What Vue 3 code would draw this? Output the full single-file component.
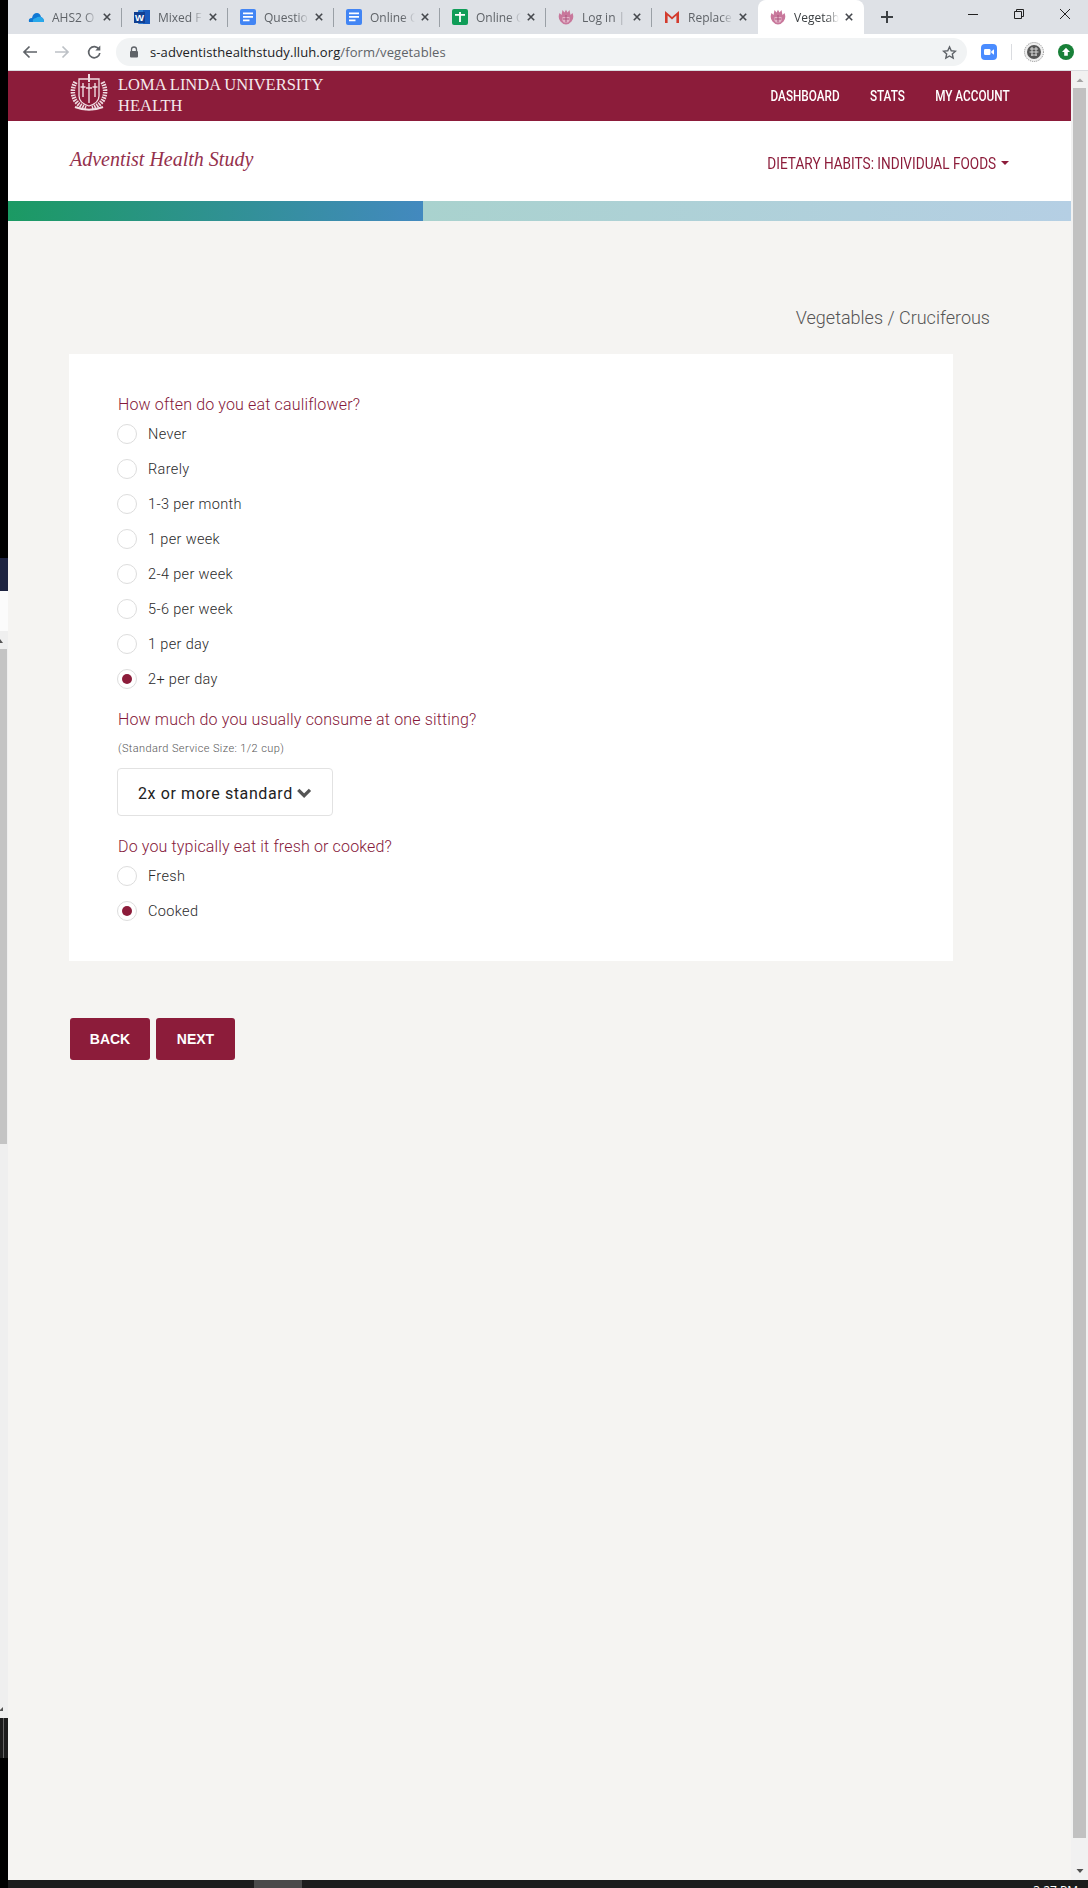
<script setup>
const tabs = [
  { title: 'AHS2 O', icon: 'cloud' },
  { title: 'Mixed F', icon: 'word' },
  { title: 'Questio', icon: 'docs' },
  { title: 'Online C', icon: 'docs' },
  { title: 'Online C', icon: 'sheets' },
  { title: 'Log in |', icon: 'crown' },
  { title: 'Replace', icon: 'gmail' },
  { title: 'Vegetab', icon: 'crown', active: true }
]

const frequency = ['Never', 'Rarely', '1-3 per month', '1 per week', '2-4 per week', '5-6 per week', '1 per day', '2+ per day']
const preparation = ['Fresh', 'Cooked']
</script>

<template>
  <div class="desktop">
    <!-- sliver of the window behind -->
    <aside class="behind">
      <div class="behind-black"></div>
      <div class="behind-navy"></div>
      <div class="behind-white"></div>
      <div class="behind-track">
        <svg class="behind-arrow" width="8" height="8" viewBox="0 0 8 8"><path d="M-3 6 L0 2 L3 6Z" fill="#555"/></svg>
        <div class="behind-thumb"></div>
        <svg class="behind-arrow-bottom" width="8" height="8" viewBox="0 0 8 8"><path d="M-1 6 L3 2 L3 6Z" fill="#555"/></svg>
      </div>
      <div class="behind-dark"><span></span></div>
      <div class="behind-black-end"></div>
    </aside>

    <div class="window">
      <!-- Tab strip -->
      <div class="tabstrip">
        <div v-for="(tab, i) in tabs" :key="i" :class="['tab', { 'tab--active': tab.active, 'tab--nosep': tab.active || i === 6 }]">
          <svg class="favicon" width="16" height="16" viewBox="0 0 16 16">
            <template v-if="tab.icon === 'cloud'">
              <path d="M1 13 Q0 9 4 9 Q5 4 9 4 Q12 4 13 8 Q16 9 16 13Z" fill="#0f78d4"/>
              <path d="M5 13 Q4 9.500 8 9 Q10 7 13 8 Q16 9 16 13Z" fill="#28a8ea"/>
            </template>
            <template v-else-if="tab.icon === 'word'">
              <rect x="4" y="1" width="12" height="14" rx="1" fill="#2b7cd3"/>
              <rect x="9" y="1" width="7" height="14" fill="#185abd"/>
              <rect x="0" y="3" width="11" height="11" fill="#103f91"/>
              <text x="5.500" y="12" font-size="9.500" font-weight="700" fill="#fff" text-anchor="middle" font-family="Liberation Sans, sans-serif">W</text>
            </template>
            <template v-else-if="tab.icon === 'docs'">
              <rect x="0" y="0" width="16" height="16" rx="2" fill="#4285f4"/>
              <path d="M3 3.500h10v1.800H3zM3 7h10v1.800H3zM3 10.500h6.500v1.800H3z" fill="#fff"/>
            </template>
            <template v-else-if="tab.icon === 'sheets'">
              <rect x="0" y="0" width="16" height="16" rx="2" fill="#0f9d58"/>
              <path d="M3 5h10v1.800H8.900V13H7.100V6.800H3zM7.100 3h1.800v2H7.100z" fill="#fff"/>
            </template>
            <template v-else-if="tab.icon === 'gmail'">
              <path d="M1 2 L8 8 L15 2 V14 H12.400 V6.600 L8 10.400 L3.600 6.600 V14 H1Z" fill="#d33b2d"/>
            </template>
            <template v-else>
              <path d="M1.500 4 Q-.500 9 2.500 12.500 Q5 15.500 8 15.500 Q11 15.500 13.500 12.500 Q16.500 9 14.500 4 L12.500 6 L11.500 1 L9.500 3.500 L8 .800 L6.500 3.500 L4.500 1 L3.500 6Z" fill="#c8779b"/>
              <path d="M4.500 8h7v3.500Q11 13.500 8 14Q5 13.500 4.500 11.500z" fill="#e3b3c8"/>
              <path d="M8 6v7.500M5 10h6" stroke="#a9507a" stroke-width="1"/>
            </template>
          </svg>
          <span class="tab-title">{{ tab.title }}</span>
          <svg class="tab-close" width="8" height="8" viewBox="0 0 8 8"><path d="M.8.8l6.400 6.400M7.200.8L.8 7.200" stroke="#45484d" stroke-width="1.600"/></svg>
        </div>
        <svg class="tab-new" width="12" height="12" viewBox="0 0 12 12"><path d="M6 0v12M0 6h12" stroke="#3c4043" stroke-width="2"/></svg>
        <div class="win-controls">
          <svg width="10" height="10" viewBox="0 0 10 10"><path d="M0 5.500h10" stroke="#222" stroke-width="1"/></svg>
          <svg width="10" height="10" viewBox="0 0 10 10"><path d="M.5 2.500h7v7h-7zM2.500 2.500v-2h7v7h-2" fill="none" stroke="#222" stroke-width="1"/></svg>
          <svg width="10" height="10" viewBox="0 0 10 10"><path d="M0 0l10 10M10 0L0 10" stroke="#222" stroke-width="1"/></svg>
        </div>
      </div>

      <!-- Address bar -->
      <div class="toolbar">
        <svg width="16" height="16" viewBox="0 0 16 16"><path d="M15 8H2M7.500 2.500L2 8l5.500 5.500" fill="none" stroke="#5f6368" stroke-width="1.700"/></svg>
        <svg width="16" height="16" viewBox="0 0 16 16"><path d="M1 8h13M8.500 2.500L14 8l-5.500 5.500" fill="none" stroke="#bdc1c6" stroke-width="1.700"/></svg>
        <svg width="16" height="16" viewBox="0 0 16 16"><path d="M13 5.200A5.600 5.600 0 1 0 13.800 9" fill="none" stroke="#5f6368" stroke-width="1.700"/><path d="M14.300 1.500v5h-5z" fill="#5f6368"/></svg>
        <div class="omnibox">
          <svg width="10" height="12" viewBox="0 0 10 12"><path d="M2.500 5V3.500a2.500 2.500 0 0 1 5 0V5" fill="none" stroke="#5f6368" stroke-width="1.300"/><rect x="1" y="5" width="8" height="6.500" rx="1" fill="#5f6368"/></svg>
          <span class="url"><span class="url-host">s-adventisthealthstudy.lluh.org</span>/form/vegetables</span>
          <svg class="star" width="15" height="15" viewBox="0 0 24 24"><path d="M12 3l2.800 6.200 6.700.7-5 4.500 1.400 6.600L12 17.600 6.100 21l1.400-6.600-5-4.500 6.700-.7z" fill="none" stroke="#5f6368" stroke-width="2.200"/></svg>
        </div>
        <div class="extensions">
          <svg width="16" height="16" viewBox="0 0 16 16"><rect width="16" height="16" rx="4" fill="#4a8cff"/><rect x="3" y="5" width="6.500" height="6" rx="1.200" fill="#fff"/><path d="M10.300 7.200L13 5.200v5.600l-2.700-2z" fill="#fff"/></svg>
          <span class="ext-sep"></span>
          <svg class="ext-avatar" width="20" height="20" viewBox="0 0 20 20"><circle cx="10" cy="10" r="9.500" fill="#eee" stroke="#888" stroke-dasharray="1 1"/><circle cx="10" cy="10" r="7" fill="#555"/><path d="M6 7h8M5.500 10h9M7 13h6M8 5v9M12 5v9" stroke="#d8d8d8" stroke-width="1"/></svg>
          <svg class="ext-update" width="16" height="16" viewBox="0 0 16 16"><circle cx="8" cy="8" r="8" fill="#188038"/><path d="M8 3.800L12 8H9.800v3.800H6.200V8H4z" fill="#fff"/></svg>
        </div>
      </div>

      <!-- Page + browser scrollbar -->
      <div class="viewport">
        <div class="page">
          <header class="topbar">
            <div class="brand">
              <svg class="crest" width="40" height="37" viewBox="0 0 40 37">
                <g fill="none" stroke="#f0dde2">
                  <path d="M6.500 8 Q1.500 17 6 26 Q10 32 17 34" stroke-width="4.500" stroke-dasharray="1.600 1"/>
                  <path d="M33.500 8 Q38.500 17 34 26 Q30 32 23 34" stroke-width="4.500" stroke-dasharray="1.600 1"/>
                  <path d="M10 5h20v17q0 7-10 10q-10-3-10-10z" stroke-width="1.300"/>
                  <path d="M20 0v8" stroke-width="2"/>
                  <path d="M14 9v14M26 9v14M20 9v20M17 14h6M11.500 13h5M23.500 13h5" stroke-width="1.400"/>
                  <path d="M6 33 Q20 38.500 34 33" stroke-width="2.200"/>
                </g>
              </svg>
              <div class="brand-name">LOMA LINDA UNIVERSITY<br>HEALTH</div>
            </div>
            <nav class="topnav">
              <a>DASHBOARD</a>
              <a>STATS</a>
              <a>MY ACCOUNT</a>
            </nav>
          </header>

          <div class="subbar">
            <div class="study-name">Adventist Health Study</div>
            <div class="section-menu"><span class="section-label">DIETARY HABITS: INDIVIDUAL FOODS</span><span class="caret"></span></div>
          </div>

          <div class="progress">
            <div class="progress-done"></div>
            <div class="progress-rest"></div>
          </div>

          <div class="section-title">Vegetables / Cruciferous</div>

          <form class="card" @submit.prevent>
            <div class="question">How often do you eat cauliflower?</div>
            <div class="radio-group">
              <label v-for="opt in frequency" :key="opt" class="radio-row">
                <span :class="['radio', { 'radio--on': opt === '2+ per day' }]"></span>
                {{ opt }}
              </label>
            </div>

            <div class="question question--next">How much do you usually consume at one sitting?</div>
            <div class="hint">(Standard Service Size: 1/2 cup)</div>
            <button type="button" class="select-btn">
              2x or more standard
              <svg width="18" height="12" viewBox="0 0 18 12"><path d="M2.500 2.500l6.500 6.500 6.500-6.500" fill="none" stroke="#555" stroke-width="3.600"/></svg>
            </button>

            <div class="question question--next">Do you typically eat it fresh or cooked?</div>
            <div class="radio-group">
              <label v-for="opt in preparation" :key="opt" class="radio-row">
                <span :class="['radio', { 'radio--on': opt === 'Cooked' }]"></span>
                {{ opt }}
              </label>
            </div>
          </form>

          <div class="actions">
            <button type="button" class="btn btn-back">BACK</button>
            <button type="button" class="btn btn-next">NEXT</button>
          </div>
        </div>

        <div class="scrollbar">
          <svg width="10" height="6" viewBox="0 0 10 6"><path d="M5 1.500L8.500 5h-7z" fill="#a3a3a3"/></svg>
          <div class="scroll-thumb"></div>
          <svg class="scroll-down" width="10" height="6" viewBox="0 0 10 6"><path d="M1.500 1h7L5 5z" fill="#505050"/></svg>
        </div>
      </div>

      <!-- Taskbar, cut off at the bottom -->
      <div class="taskbar">
        <span class="task-active"></span>
        <span class="clock">3:27 PM</span>
      </div>
    </div>
  </div>
</template>

<style>
html, body { margin: 0; background: #000; }
</style>

<style scoped>
.desktop {
  display: flex;
  width: 1088px;
  height: 1888px;
  overflow: hidden;
  font-family: Roboto, sans-serif;
}

/* Window behind */
.behind {
  width: 8px;
  flex-shrink: 0;
  display: flex;
  flex-direction: column;
  background: #000;
}
.behind > div { flex-shrink: 0; }
.behind-black { height: 558px; background: #000; }
.behind-navy { height: 33px; background: #1d2340; }
.behind-white { height: 40px; background: #fbfbfb; }
.behind-track {
  height: 1087px;
  background: #efefef;
  display: flex;
  flex-direction: column;
}
.behind-arrow { margin-top: 6px; flex-shrink: 0; }
.behind-thumb { height: 495px; width: 7px; margin-top: 4px; background: #c4c4c4; flex-shrink: 0; }
.behind-arrow-bottom { margin-top: 561px; flex-shrink: 0; }
.behind-dark { height: 40px; background: #1c1c1c; }
.behind-dark span { display: block; width: 1px; height: 40px; margin-left: 3px; background: #666; }
.behind-black-end { flex: 1; background: #000; }

.window {
  flex: 1;
  min-width: 0;
  display: flex;
  flex-direction: column;
}

/* Tabs */
.tabstrip {
  height: 34px;
  flex-shrink: 0;
  display: flex;
  align-items: center;
  padding-left: 8px;
  background: #dee1e6;
  font-family: "Open Sans", sans-serif;
  font-size: 12px;
  color: #5f6368;
}
.tab {
  position: relative;
  width: 106px;
  height: 34px;
  box-sizing: border-box;
  display: flex;
  align-items: center;
  padding-left: 12px;
  flex-shrink: 0;
}
.tab::after {
  content: "";
  position: absolute;
  right: 0;
  top: 8px;
  width: 1px;
  height: 19px;
  background: #9aa0a6;
}
.tab--nosep::after { display: none; }
.tab--active {
  background: #fff;
  border-radius: 8px 8px 0 0;
  color: #3c4043;
}
.favicon { flex-shrink: 0; }
.tab-title {
  margin-left: 8px;
  width: 45px;
  white-space: nowrap;
  overflow: hidden;
  -webkit-mask-image: linear-gradient(to right, #000 72%, transparent);
  mask-image: linear-gradient(to right, #000 72%, transparent);
}
.tab-close { margin-left: 6px; flex-shrink: 0; }
.tab-new { margin-left: 17px; }
.win-controls {
  margin-left: auto;
  display: flex;
  gap: 36px;
  padding: 0 18px 6px 0;
}

/* Toolbar */
.toolbar {
  height: 37px;
  flex-shrink: 0;
  box-sizing: border-box;
  display: flex;
  align-items: center;
  gap: 16px;
  padding-left: 14px;
  background: #fff;
  border-bottom: 1px solid #dadce0;
}
.omnibox {
  width: 851px;
  height: 28px;
  margin-left: -2px;
  box-sizing: border-box;
  display: flex;
  align-items: center;
  padding: 0 10px 0 13px;
  background: #f1f3f4;
  border-radius: 14px;
  flex-shrink: 0;
}
.url {
  margin-left: 11px;
  font-family: "Open Sans", sans-serif;
  font-size: 13px;
  letter-spacing: 0.1px;
  color: #5f6368;
  white-space: nowrap;
}
.url-host { color: #202124; }
.star { margin-left: auto; }
.extensions {
  display: flex;
  align-items: center;
  margin-left: -2px;
}
.ext-sep { width: 1px; height: 16px; margin: 0 12px 0 14px; background: #dadce0; }
.ext-update { margin-left: 14px; }

/* Page */
.viewport {
  flex: 1;
  min-height: 0;
  display: flex;
}
.page {
  flex: 1;
  min-width: 0;
  background: #f5f4f2;
}
.topbar {
  height: 50px;
  display: flex;
  align-items: center;
  justify-content: space-between;
  padding: 0 61px;
  background: #8c1c3a;
}
.brand { display: flex; align-items: center; }
.crest { flex-shrink: 0; margin-top: -7px; }
.brand-name {
  margin-left: 9px;
  margin-top: -3px;
  font-family: "Liberation Serif", serif;
  font-size: 16.500px;
  line-height: 21px;
  color: #f5e9ec;
}
/* no condensed face installed, so the nav text gets squeezed */
.topnav {
  display: flex;
  gap: 36px;
  font-size: 14px;
  font-weight: 500;
  color: #fff;
  white-space: nowrap;
  transform: scaleX(0.84);
  transform-origin: right center;
}
.subbar {
  height: 80px;
  display: flex;
  align-items: center;
  justify-content: space-between;
  padding: 0 62px;
  background: #fff;
}
.study-name {
  font-family: "Liberation Serif", serif;
  font-style: italic;
  font-size: 20px;
  color: #94304c;
  margin-top: -4px;
}
.section-menu {
  display: flex;
  align-items: center;
  margin-top: 4px;
  color: #8c1c3a;
}
.section-label {
  font-size: 16px;
  white-space: nowrap;
  transform: scaleX(0.85);
  transform-origin: right center;
}
.caret {
  margin-left: 5px;
  border-top: 4px solid #8c1c3a;
  border-left: 4px solid transparent;
  border-right: 4px solid transparent;
}
.progress { display: flex; height: 20px; }
.progress-done {
  width: 415px;
  background: linear-gradient(to right, #1b9a63, #4389bf);
}
.progress-rest {
  flex: 1;
  background: linear-gradient(to right, #a9d2ce, #b5cfe4);
}
.section-title {
  margin-top: 85px;
  padding-right: 81px;
  height: 24px;
  line-height: 24px;
  text-align: right;
  font-size: 18px;
  font-weight: 300;
  color: #555;
}
.card {
  margin: 24px 0 0 61px;
  width: 884px;
  box-sizing: border-box;
  padding: 39px 48px 40px;
  background: #fff;
}
.question {
  margin-left: 1px;
  font-size: 16px;
  font-weight: 300;
  line-height: 24px;
  letter-spacing: 0.15px;
  color: #85183a;
}
.question--next { margin-top: 19px; }
.radio-group {
  display: flex;
  flex-direction: column;
  gap: 15px;
  margin-top: 7px;
}
.radio-row {
  display: flex;
  align-items: center;
  height: 20px;
  font-size: 14.500px;
  font-weight: 300;
  letter-spacing: 0.35px;
  color: #2a2a2a;
}
.radio {
  width: 20px;
  height: 20px;
  box-sizing: border-box;
  display: flex;
  align-items: center;
  justify-content: center;
  margin-right: 11px;
  border: 1px solid #ddd;
  border-radius: 50%;
  background: #fff;
}
.radio--on::before {
  content: "";
  width: 10px;
  height: 10px;
  border-radius: 50%;
  background: #8c1c3a;
}
.hint {
  margin: 10px 0 0 1px;
  font-size: 11px;
  font-weight: 300;
  line-height: 14px;
  letter-spacing: 0.4px;
  color: #555;
}
.select-btn {
  display: flex;
  align-items: center;
  width: 216px;
  height: 48px;
  box-sizing: border-box;
  margin-top: 12px;
  padding: 2px 20px 0;
  gap: 3px;
  font-family: Roboto, sans-serif;
  font-size: 16px;
  letter-spacing: 0.6px;
  white-space: nowrap;
  color: #222;
  background: #fff;
  border: 1px solid #e2e2e2;
  border-radius: 4px;
}
.actions {
  display: flex;
  gap: 6px;
  margin: 57px 0 0 62px;
}
.btn {
  height: 42px;
  box-sizing: border-box;
  font-family: "Liberation Sans", sans-serif;
  font-size: 14px;
  font-weight: 700;
  color: #fff;
  background: #8c1c3a;
  border: none;
  border-radius: 3px;
}
.btn-back { width: 80px; }
.btn-next { width: 79px; }

/* Scrollbar */
.scrollbar {
  width: 17px;
  flex-shrink: 0;
  display: flex;
  flex-direction: column;
  align-items: center;
  background: #f1f1f1;
}
.scrollbar svg:first-child { margin-top: 6px; flex-shrink: 0; }
.scroll-thumb {
  width: 13px;
  height: 1750px;
  margin-top: 5px;
  flex-shrink: 0;
  background: #c1c1c1;
}
.scroll-down { margin-top: 30px; flex-shrink: 0; }

/* Taskbar */
.taskbar {
  position: relative;
  height: 8px;
  flex-shrink: 0;
  background: #1c1c1c;
  overflow: hidden;
}
.task-active {
  position: absolute;
  left: 246px;
  top: 0;
  width: 48px;
  height: 8px;
  background: #4a4a4a;
}
.clock {
  position: absolute;
  right: 10px;
  top: 3px;
  font-family: "Open Sans", sans-serif;
  font-size: 12px;
  line-height: 16px;
  color: #fff;
}
</style>
